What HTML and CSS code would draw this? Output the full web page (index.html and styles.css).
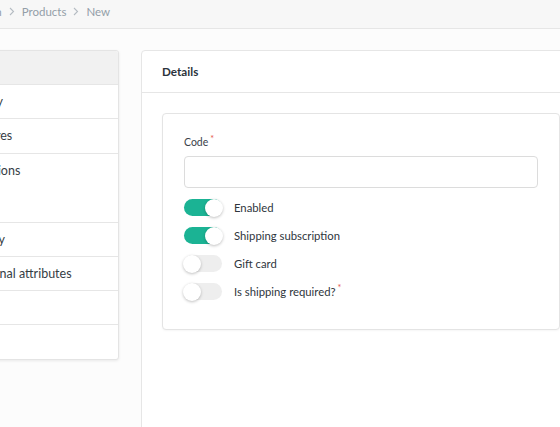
FILE: index.html
```html
<!DOCTYPE html>
<html>
<head>
<meta charset="utf-8">
<link rel="stylesheet" href="styles.css">
</head>
<body>
<header class="topbar">
  <nav class="crumbs">
    <span class="crumb">Admin</span>
    <svg class="chev" width="6" height="9" viewBox="0 0 6 9"><path d="M1 1l3.5 3.5L1 8" fill="none" stroke="#b5bcc3" stroke-width="1.1"/></svg>
    <span class="crumb">Products</span>
    <svg class="chev" width="6" height="9" viewBox="0 0 6 9"><path d="M1 1l3.5 3.5L1 8" fill="none" stroke="#b5bcc3" stroke-width="1.1"/></svg>
    <span class="crumb">New</span>
  </nav>
</header>
<main class="layout">
  <aside class="menu">
    <div class="menu-item active">Details</div>
    <div class="menu-item">Family</div>
    <div class="menu-item">Pictures</div>
    <div class="menu-item tall">Locations</div>
    <div class="menu-item">Supply</div>
    <div class="menu-item">Optional attributes</div>
    <div class="menu-item">SEO</div>
    <div class="menu-item">Tags</div>
  </aside>
  <section class="panel">
    <div class="panel-head">Details</div>
    <div class="panel-body">
      <div class="card">
        <label class="field-label">Code<span class="req">*</span></label>
        <input class="input" type="text">
        <div class="toggles">
          <div class="toggle-row"><span class="switch on"><span class="thumb"></span></span><span class="toggle-label">Enabled</span></div>
          <div class="toggle-row"><span class="switch on"><span class="thumb"></span></span><span class="toggle-label">Shipping subscription</span></div>
          <div class="toggle-row"><span class="switch"><span class="thumb"></span></span><span class="toggle-label">Gift card</span></div>
          <div class="toggle-row"><span class="switch"><span class="thumb"></span></span><span class="toggle-label">Is shipping required?<span class="req">*</span></span></div>
        </div>
      </div>
    </div>
  </section>
</main>
</body>
</html>
```
FILE: styles.css
```css
html, body {
  margin: 0;
  padding: 0;
  overflow: hidden;
  height: 100%;
}
body {
  background: #fcfcfc;
  font-family: Lato, "Open Sans", sans-serif;
  color: #333a42;
}
.topbar {
  box-sizing: border-box;
  height: 29px;
  padding-bottom: 5px;
  background: #f7f7f7;
  border-bottom: 1px solid #e6e6e6;
  display: flex;
  align-items: center;
}
.crumbs {
  display: flex;
  align-items: center;
  gap: 6px;
  margin-left: -31px;
  font-size: 11.5px;
  color: #939ea8;
}
.chev { display: block; margin: 0 1px; }
.layout {
  display: flex;
  align-items: flex-start;
  gap: 22px;
  margin-left: -62px;
  padding-top: 21px;
  width: 660px;
}
.menu {
  width: 179px;
  flex: none;
  background: #fff;
  border: 1px solid #e4e4e4;
  border-radius: 3px;
  box-shadow: 0 1px 3px rgba(0,0,0,0.08);
  font-size: 12.5px;
  overflow: hidden;
}
.menu-item {
  height: 33.3px;
  line-height: 33px;
  padding: 0 20px 0 29px;
  border-top: 1px solid #e6e6e6;
  white-space: nowrap;
  color: #353d45;
}
.menu-item.active {
  border-top: none;
  height: 33px;
  background: #f1f1f1;
  color: transparent;
}
.menu-item.tall { height: 68px; }
.panel {
  width: 436px;
  flex: none;
  background: #fff;
  border: 1px solid #e6e6e6;
  border-radius: 4px;
  min-height: 420px;
}
.panel-head {
  height: 41px;
  line-height: 41px;
  padding: 0 20px;
  font-weight: 700;
  font-size: 11.7px;
  color: #2b333b;
  border-bottom: 1px solid #e6e6e6;
}
.panel-body {
  padding: 20px 18px 20px 20px;
}
.card {
  border: 1px solid #e4e4e4;
  border-radius: 4px;
  padding: 20px 21px 29px 21px;
  background: #fff;
  box-shadow: 0 1px 2px rgba(0,0,0,0.04);
  display: flex;
  flex-direction: column;
}
.field-label {
  font-size: 10.5px;
  color: #3a4149;
  line-height: 16px;
  margin-bottom: 6px;
}
.req {
  color: #e5534b;
  font-size: 9px;
  vertical-align: top;
  margin-left: 2px;
  position: relative;
  top: -3px;
}
.input {
  height: 32px;
  box-sizing: border-box;
  border: 1px solid #dcdcdc;
  border-radius: 4px;
  background: #fff;
  margin: 0;
  width: 100%;
}
.toggles {
  display: flex;
  flex-direction: column;
  gap: 10px;
  margin-top: 10px;
}
.toggle-row {
  display: flex;
  align-items: center;
  gap: 12px;
  height: 18px;
}
.switch {
  position: relative;
  width: 38px;
  height: 17px;
  border-radius: 9px;
  background: #eeeeee;
  flex: none;
}
.switch.on { background: #1bb394; }
.thumb {
  position: absolute;
  top: 0;
  left: -1px;
  width: 18px;
  height: 18px;
  border-radius: 50%;
  background: #fff;
  box-shadow: 0 1px 3px rgba(0,0,0,0.25);
}
.switch.on .thumb { left: 21px; }
.toggle-label {
  font-size: 11.3px;
  color: #2f363d;
}
```
